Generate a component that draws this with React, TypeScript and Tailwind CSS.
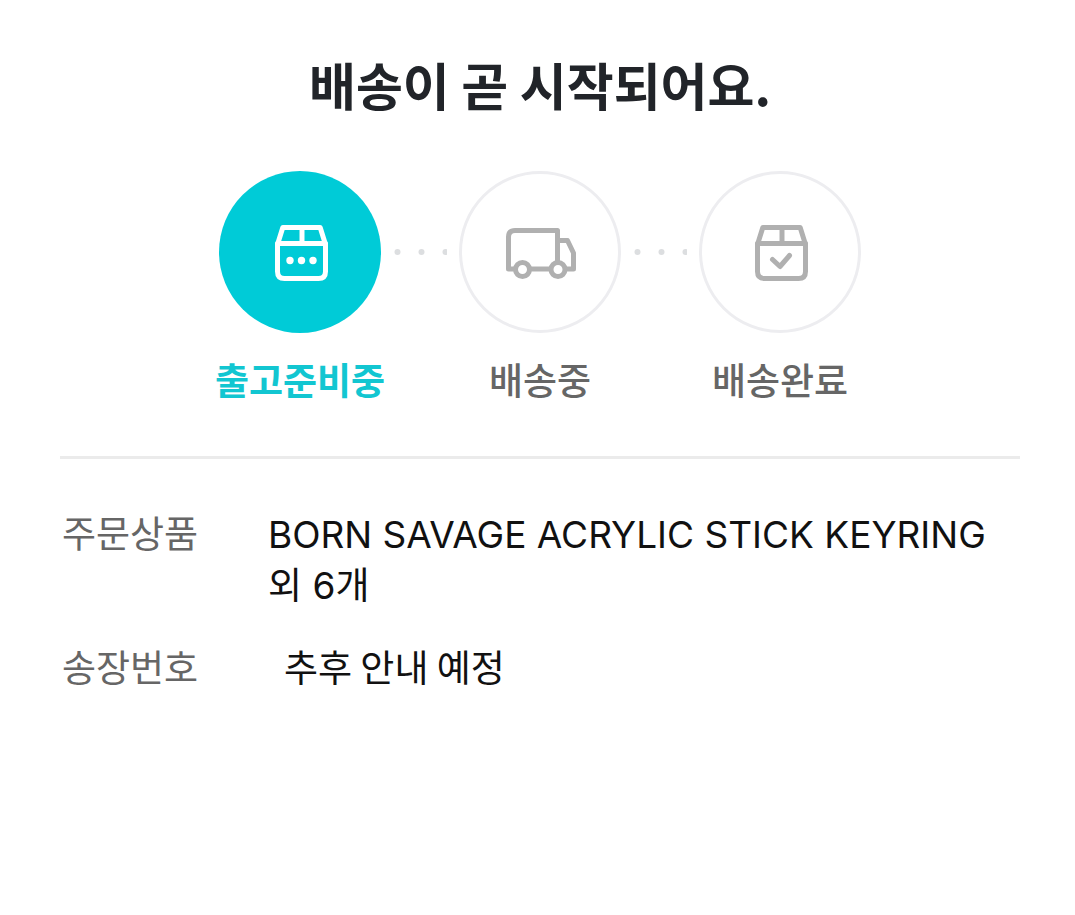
import React from 'react';

const BoxIcon = ({ children }: { children: React.ReactNode }) => (
  <svg width="82" height="82" viewBox="-1 1 82 82" fill="none" stroke="currentColor" strokeWidth="5" strokeLinejoin="round" strokeLinecap="round" aria-hidden="true">
    <path d="M17.5 34.5 22.8 17.5H60.2L65.5 34.5" />
    <path d="M17.5 33.5H65.5V61.5Q65.5 68.5 58.5 68.5H24.5Q17.5 68.5 17.5 61.5Z" />
    <path d="M42 17.5V33" strokeLinecap="butt" />
    {children}
  </svg>
);

const PreparingIcon = () => (
  <BoxIcon>
    <g fill="currentColor" stroke="none">
      <circle cx="30" cy="50.5" r="3.7" />
      <circle cx="41.5" cy="50.5" r="3.7" />
      <circle cx="53" cy="50.5" r="3.7" />
    </g>
  </BoxIcon>
);

const DeliveredIcon = () => (
  <BoxIcon>
    <path d="M32.5 49.5 40 56.5 49.5 45.5" />
  </BoxIcon>
);

const TruckIcon = () => (
  <svg width="90" height="82" viewBox="0 1 90 82" fill="none" stroke="currentColor" strokeWidth="5" strokeLinejoin="round" aria-hidden="true">
    <path d="M20 59H13.5V27Q13.5 20.5 20 20.5H62.5V51" />
    <path d="M34 59H56" />
    <path d="M62.5 30.5H72.5L78.5 43V59H69" />
    <circle cx="27.5" cy="59.5" r="7" />
    <circle cx="63" cy="59.5" r="7" />
  </svg>
);

const StepDots = () => (
  <svg width="66" height="162" viewBox="0 0 66 162" className="mr-3 shrink-0 text-[#dcdee0]" fill="currentColor" aria-hidden="true">
    <circle cx="16.5" cy="81" r="3" />
    <circle cx="40.5" cy="81" r="3" />
    <circle cx="64.5" cy="81" r="3" />
  </svg>
);

const steps = [
  { label: '출고준비중', icon: <PreparingIcon />, active: true },
  { label: '배송중', icon: <TruckIcon />, active: false },
  { label: '배송완료', icon: <DeliveredIcon />, active: false },
];

const App = () => {
  return (
    <main className="min-h-screen bg-white pt-12 pr-[55px] pl-[60px] font-['Noto_Sans_CJK_KR',sans-serif]">
      <h1 className="text-center text-[51px] leading-[72px] font-bold text-[#212429]">배송이 곧 시작되어요.</h1>

      <ol className="mt-[51px] flex justify-center">
        {steps.map((step, index) => (
          <React.Fragment key={step.label}>
            {index > 0 && (
              <li role="presentation">
                <StepDots />
              </li>
            )}
            <li className="flex w-[162px] flex-col items-center" aria-current={step.active ? 'step' : undefined}>
              <div
                className={
                  step.active
                    ? 'flex size-[162px] items-center justify-center rounded-full bg-[#00cbd7] text-white'
                    : 'flex size-[162px] items-center justify-center rounded-full border-3 border-[#ededf0] text-[#b0b0b0]'
                }
              >
                {step.icon}
              </div>
              <span
                className={
                  step.active
                    ? 'mt-[21px] text-[37px] leading-[51px] font-bold whitespace-nowrap text-[#12c6d1]'
                    : 'mt-[21px] text-[37px] leading-[51px] font-medium whitespace-nowrap text-[#666666]'
                }
              >
                {step.label}
              </span>
            </li>
          </React.Fragment>
        ))}
      </ol>

      <hr className="mt-[51px] border-t-3 border-[#ebebeb]" />

      <dl className="mt-12 grid grid-cols-[208px_1fr] gap-y-[30px] text-[37px] leading-[51px]">
        <dt className="pl-0.5 text-[#666666]">주문상품</dt>
        <dd className="pt-0.5 font-[Inter,'Noto_Sans_CJK_KR',sans-serif] text-[#111111]">
          BORN SAVAGE ACRYLIC STICK KEYRING 외 6개
        </dd>
        <dt className="pl-0.5 text-[#666666]">송장번호</dt>
        <dd className="pl-4 text-[#111111]">추후 안내 예정</dd>
      </dl>
    </main>
  );
};

export default App;
